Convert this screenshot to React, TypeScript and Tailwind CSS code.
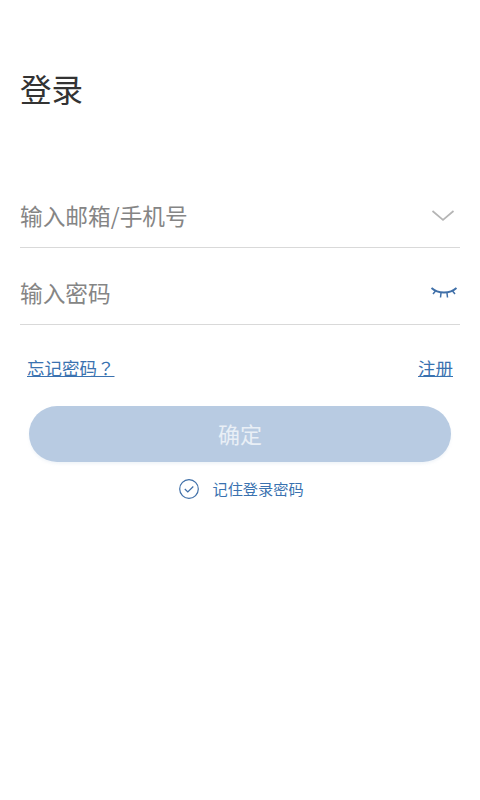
const font = "font-['Noto_Sans_CJK_SC','Liberation_Sans',sans-serif]";

export default function App() {
  return (
    <div className={`${font} min-h-[800px] bg-white px-5`}>
      <h1 className="pt-[69px] text-[31.5px] leading-[38px] font-normal text-[#333333]">登录</h1>

      <div className="mt-[80px] flex h-[61px] items-center justify-between border-b border-[#d9d9d9] pb-[2px]">
        <span className="text-[22.7px] leading-[30px] text-[#858585]">输入邮箱/手机号</span>
        <svg width="24" height="14" viewBox="0 0 24 14" fill="none" stroke="#b5b5b5" strokeWidth="1.7" className="mr-[5px]">
          <path d="M1.500 2l10.500 9 10.500-9" />
        </svg>
      </div>

      <div className="mt-[16px] flex h-[61px] items-center justify-between border-b border-[#d9d9d9] pb-[2px]">
        <span className="-mt-px text-[22.7px] leading-[30px] text-[#858585]">输入密码</span>
        <svg width="28" height="14" viewBox="0 0 28 14" fill="none" stroke="#3f6fa8" strokeWidth="1.8" className="mr-[2px]">
          <path d="M1.500 2c6.500 6 18.500 6 25 0" />
          <path d="M5.500 5L3 8M11 7L10.500 11.500M17 7L17.500 11.500M22.500 5l2.500 3" strokeWidth="1.500" />
        </svg>
      </div>

      <div className="mt-[31px] flex justify-between px-[7px] text-[17.5px] leading-[24px] text-[#3a72b0]">
        <a className="underline">
          忘记密码<span className="font-['Noto_Sans_CJK_JP',sans-serif]">？</span>
        </a>
        <a className="underline">注册</a>
      </div>

      <button className="mx-[9px] mt-[26px] flex h-[56px] w-[422px] items-center justify-center rounded-full bg-[#b8cbe2] pb-[2px] text-[22px] text-[#e9eff6] shadow-[0_2px_3px_rgba(184,203,226,0.2)]">
        确定
      </button>

      <div className="mt-[17px] flex items-center justify-center gap-[13px] pl-[3px]">
        <svg width="20" height="20" viewBox="0 0 20 20" fill="none" stroke="#3f6fa8" strokeWidth="1.200">
          <circle cx="10" cy="10" r="9.300" />
          <path d="M5.800 10l3 3 5.500-5.500" />
        </svg>
        <span className="-mt-[2px] text-[15.2px] leading-[20px] text-[#3a72b0]">记住登录密码</span>
      </div>
    </div>
  );
}
